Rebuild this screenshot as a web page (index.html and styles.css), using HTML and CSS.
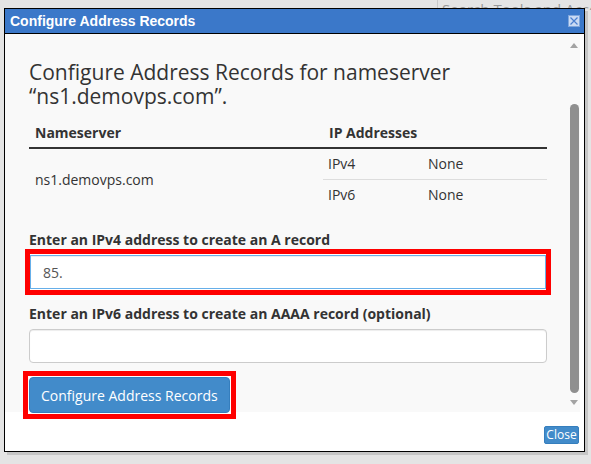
FILE: index.html
```html
<!DOCTYPE html>
<html lang="en">
<head>
<meta charset="utf-8">
<title>Configure Address Records</title>
<link rel="stylesheet" href="styles.css">
</head>
<body>
<div class="backdrop">
  <div class="bg-search">Search Tools and Accounts</div>
</div>
<div class="dialog">
  <div class="titlebar">
    <span class="title">Configure Address Records</span>
    <span class="close-x" aria-label="close">
      <svg width="12" height="12" viewBox="0 0 12 12"><rect x="0.5" y="0.5" width="11" height="11" fill="#c9daf3" stroke="#7fa6dc"/><path d="M2.5 2.5 L9.5 9.5 M9.5 2.5 L2.5 9.5" stroke="#4a7fcf" stroke-width="1.2" fill="none"/></svg>
    </span>
  </div>
  <div class="scroller">
    <div class="content">
      <h1 class="heading">Configure Address Records for nameserver “ns1.demovps.com”.</h1>
      <table class="records">
        <thead>
          <tr><th class="c1">Nameserver</th><th colspan="2">IP Addresses</th></tr>
        </thead>
        <tbody>
          <tr><td class="c1" rowspan="2">ns1.demovps.com</td><td class="c2">IPv4</td><td class="c3">None</td></tr>
          <tr class="sub"><td class="c2">IPv6</td><td class="c3">None</td></tr>
        </tbody>
      </table>
      <label class="field-label" for="ipv4">Enter an IPv4 address to create an A record</label>
      <div class="mark mark-input">
        <input id="ipv4" class="field focused" type="text" value="85.">
      </div>
      <label class="field-label second" for="ipv6">Enter an IPv6 address to create an AAAA record (optional)</label>
      <input id="ipv6" class="field" type="text" value="">
      <div class="mark mark-button">
        <button class="primary" type="button">Configure Address Records</button>
      </div>
    </div>
    <div class="scrollbar">
      <span class="arrow up"></span>
      <span class="thumb"></span>
      <span class="arrow down"></span>
    </div>
  </div>
  <div class="footer">
    <button class="close-btn" type="button">Close</button>
  </div>
</div>
</body>
</html>
```
FILE: styles.css
```css
* { box-sizing: border-box; }
html, body { margin: 0; padding: 0; }
body {
  width: 591px;
  height: 464px;
  overflow: hidden;
  background: #e4e4e4;
  font-family: "Open Sans", "Liberation Sans", sans-serif;
  color: #333;
  position: relative;
}
.backdrop {
  width: 591px;
  height: 464px;
  display: flex;
  justify-content: flex-end;
  align-items: flex-start;
  overflow: hidden;
}
.bg-search {
  width: 154px;
  height: 20px;
  margin-top: -10px;
  border-left: 1px solid #c9c9c9;
  padding: 9px 0 0 4px;
  font-size: 15px;
  line-height: 20px;
  color: #9a9a9a;
  white-space: nowrap;
  overflow: hidden;
}
.dialog {
  position: absolute;
  left: 4px;
  top: 8px;
  width: 581px;
  height: 444px;
  border: 1px solid #000;
  background: #fff;
  box-shadow: 3px 3px 0 #c6c6c6;
  display: flex;
  flex-direction: column;
}
.titlebar {
  height: 25px;
  flex: none;
  background: #3b78c9;
  border-bottom: 1px solid #000;
  display: flex;
  align-items: center;
  justify-content: space-between;
  padding: 0 4px 1px 5px;
}
.title {
  font-family: "Liberation Sans", Arial, sans-serif;
  font-weight: bold;
  font-size: 14px;
  color: #fff;
}
.close-x { display: flex; }
.scroller {
  height: 378px;
  flex: none;
  margin-right: 4px;
  background: #f9f9f9;
  display: flex;
}
.content {
  flex: 1;
  padding: 26px 21px 0 24px;
}
.heading {
  margin: 0 0 9px 0;
  font-size: 21px;
  line-height: 24px;
  font-weight: 400;
  color: #333;
}
.records {
  width: 100%;
  border-collapse: collapse;
  font-size: 14px;
  margin-bottom: 20px;
}
.records th {
  text-align: left;
  font-weight: 700;
  height: 31px;
  padding: 0 5px 0 6px;
  border-bottom: 2px solid #333;
}
.records td {
  height: 31px;
  padding: 0 5px;
  vertical-align: middle;
}
.records .c1 { width: 294px; padding-left: 6px; }
.records .c2 { width: 100px; }
.records tr.sub td { border-top: 1px solid #ddd; }
.field-label {
  display: block;
  font-size: 14px;
  font-weight: 700;
  line-height: 20px;
  margin-bottom: 5px;
}
.field-label.second { margin-top: 15px; }
.field {
  display: block;
  width: 100%;
  height: 34px;
  padding: 6px 12px;
  font-family: "Open Sans", "Liberation Sans", sans-serif;
  font-size: 14px;
  color: #555;
  background: #fff;
  border: 1px solid #ccc;
  border-radius: 4px;
  box-shadow: inset 0 1px 1px rgba(0,0,0,.075);
}
.field.focused {
  border-color: #66afe9;
  border-radius: 0;
  outline: none;
}
.mark {
  border: 5px solid #f00;
  background: #fff;
}
.mark-input {
  margin: -6px -4px -6px -4px;
  padding: 1px 0;
}
.mark-button {
  width: fit-content;
  margin: 8px 0 0 -6px;
  padding: 1px;
}
.primary {
  display: block;
  height: 36px;
  padding: 0 11px;
  font-family: "Open Sans", "Liberation Sans", sans-serif;
  font-size: 14px;
  color: #fff;
  background: #428bca;
  border: 1px solid #357ebd;
  border-radius: 4px;
}
.scrollbar {
  width: 12px;
  flex: none;
  display: flex;
  flex-direction: column;
  align-items: center;
  padding: 9px 0 7px;
}
.arrow {
  width: 0;
  height: 0;
  border-left: 4px solid transparent;
  border-right: 4px solid transparent;
}
.arrow.up { border-bottom: 5px solid #a3a3a3; }
.arrow.down { border-top: 5px solid #a3a3a3; margin-top: auto; }
.thumb {
  width: 9px;
  height: 289px;
  margin-top: 56px;
  border-radius: 5px;
  background: #8f8f8f;
}
.footer {
  flex: 1;
  display: flex;
  justify-content: flex-end;
  align-items: flex-start;
  padding: 14px 5px 0 0;
}
.close-btn {
  width: 35px;
  height: 18px;
  padding: 0;
  font-family: "Open Sans", "Liberation Sans", sans-serif;
  font-size: 12px;
  line-height: 16px;
  color: #fff;
  background: #428bca;
  border: 1px solid #357ebd;
  border-radius: 2px;
}
```
